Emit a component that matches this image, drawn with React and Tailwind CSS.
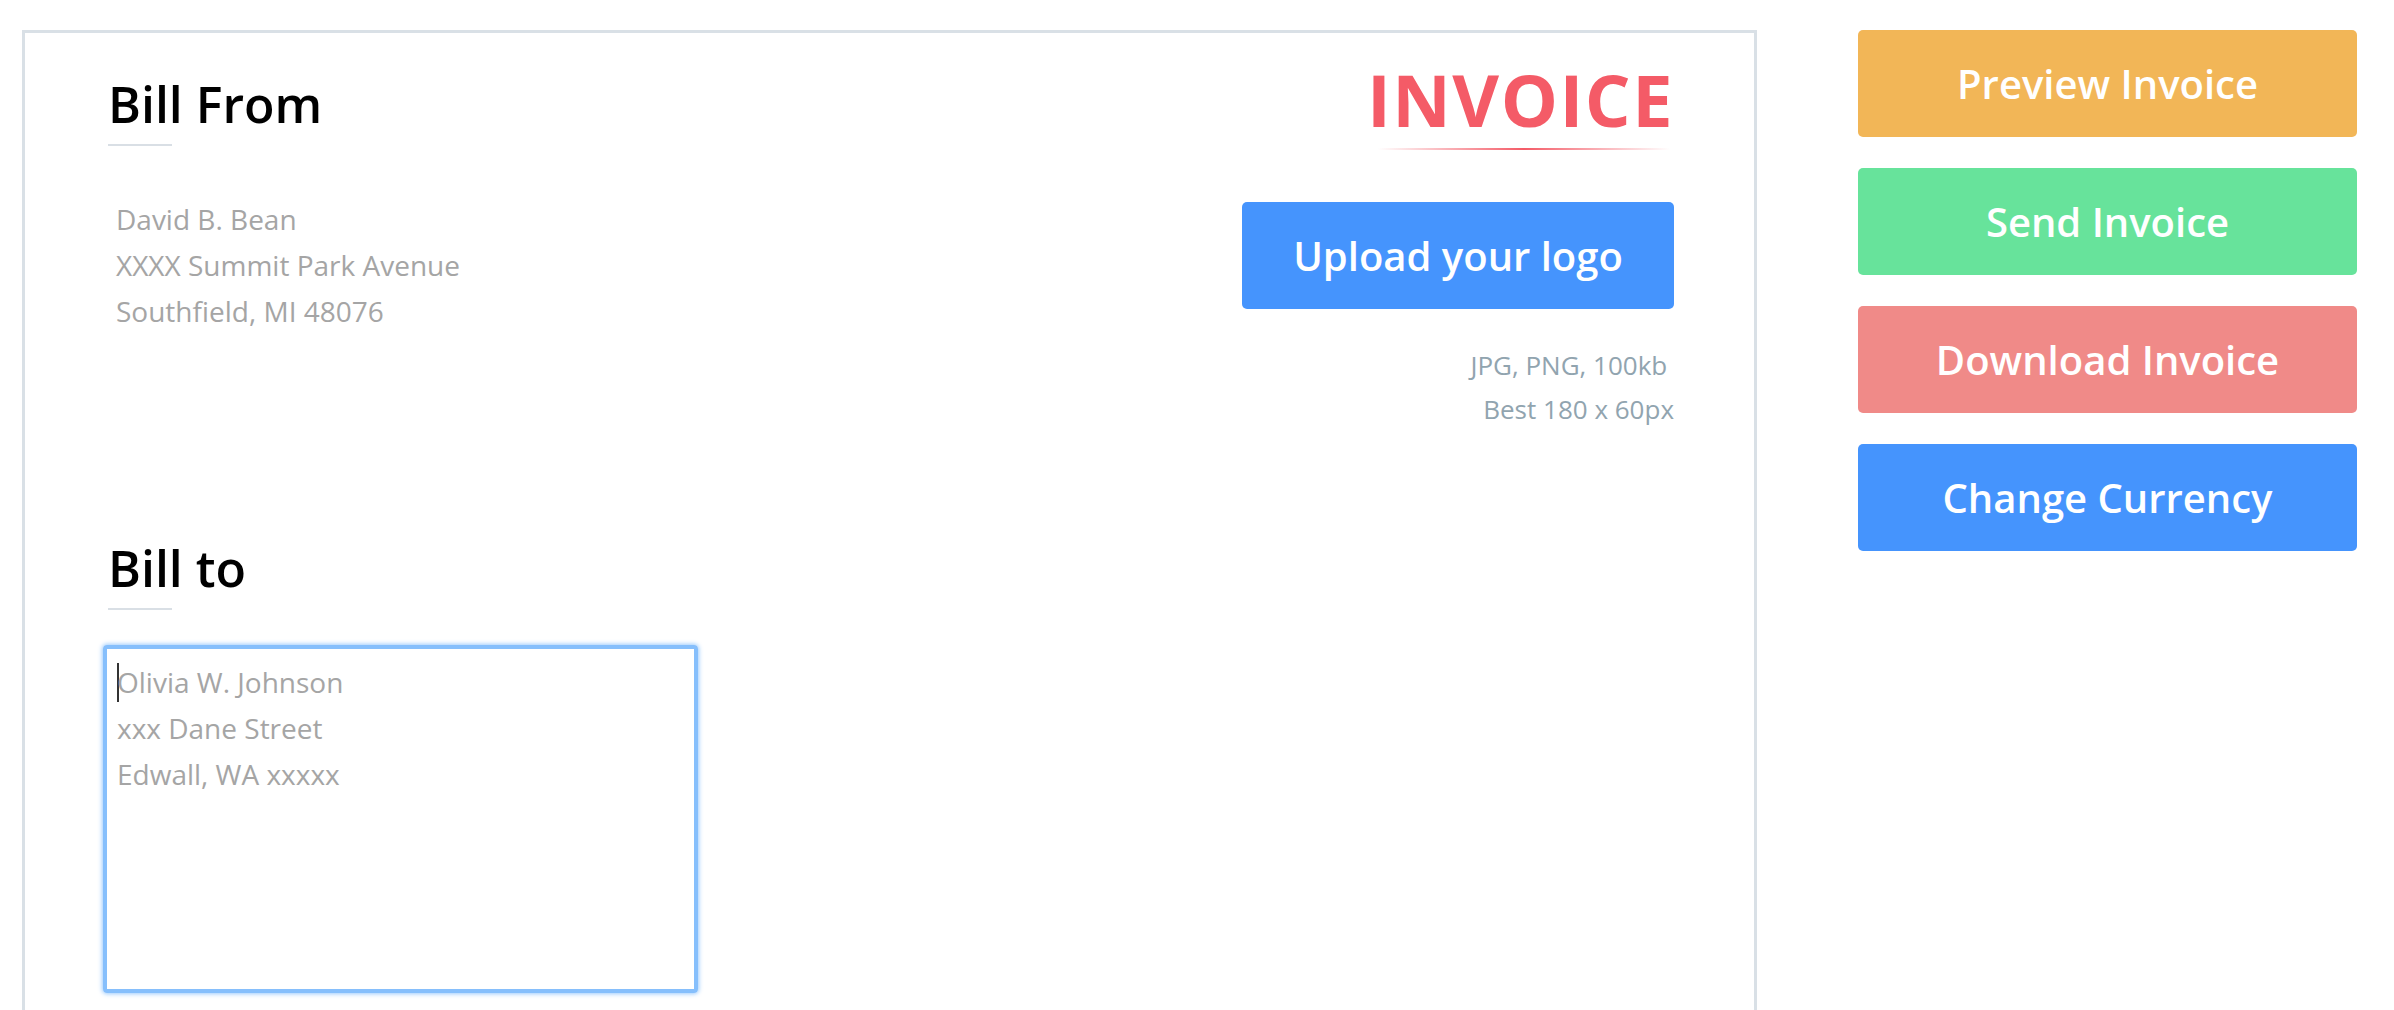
import React from 'react';

const actions = [
  { label: 'Preview Invoice', color: 'bg-[#f2b657]' },
  { label: 'Send Invoice', color: 'bg-[#67e39b]' },
  { label: 'Download Invoice', color: 'bg-[#f08a88]' },
  { label: 'Change Currency', color: 'bg-[#4594fd]' },
];

function SectionTitle({ children }) {
  return (
    <div>
      <h2 className="text-[50px] leading-[50px] font-semibold text-black">{children}</h2>
      <div className="mt-[15px] h-[2px] w-[64px] bg-[#d9dfe5]" />
    </div>
  );
}

export default function App() {
  return (
    <div className="h-screen overflow-hidden bg-white font-['Open_Sans',sans-serif]">
      <div className="flex items-start pt-[30px] pl-[22px]">
        {/* invoice sheet */}
        <div className="w-[1735px] h-[1100px] shrink-0 border-[3px] border-[#d9e0e6] pt-[30px] pl-[83px] pr-[80px]">
          <div className="flex justify-between items-start">
            <div className="mt-[16px]">
              <SectionTitle>Bill From</SectionTitle>
              <div className="mt-[50px] ml-[8px] text-[28px] leading-[46px] text-[#a5a5a5]">
                <div>David B. Bean</div>
                <div>XXXX Summit Park Avenue</div>
                <div>Southfield, MI 48076</div>
              </div>

              <div className="mt-[209px]">
                <SectionTitle>Bill to</SectionTitle>
              </div>
              <div className="mt-[35px] -ml-[5px] w-[595px] h-[348px] border-[4px] border-[#86bffc] rounded-[4px] shadow-[0_0_4px_1px_rgba(130,190,252,0.8)] p-[10px] text-[28px] leading-[46px] text-[#a5a5a5]">
                <div>
                  <span className="inline-block w-[2px] h-[39px] -mr-[2px] align-[-9px] bg-[#333]" />
                  Olivia W. Johnson
                </div>
                <div>xxx Dane Street</div>
                <div>Edwall, WA xxxxx</div>
              </div>
            </div>

            <div className="flex flex-col items-end">
              <div className="text-[72px] leading-[72px] font-bold tracking-[1.5px] text-[#f45b67]">INVOICE</div>
              <div className="mt-[13px] mr-[4px] h-[2px] w-[292px] bg-gradient-to-r from-transparent via-[#f45b67] to-transparent" />
              <button className="mt-[52px] w-[432px] h-[107px] rounded-[5px] bg-[#4594fd] text-white text-[40px] font-semibold">
                Upload your logo
              </button>
              <div className="mt-[34px] text-right text-[26px] leading-[44px] text-[#91a4af]">
                <div>JPG, PNG, 100kb&nbsp;</div>
                <div>Best 180 x 60px</div>
              </div>
            </div>
          </div>
        </div>

        {/* actions */}
        <div className="ml-[101px] w-[499px] flex flex-col gap-[31px]">
          {actions.map((a) => (
            <button
              key={a.label}
              className={`${a.color} h-[107px] w-full rounded-[5px] text-white text-[40px] font-semibold`}
            >
              {a.label}
            </button>
          ))}
        </div>
      </div>
    </div>
  );
}
